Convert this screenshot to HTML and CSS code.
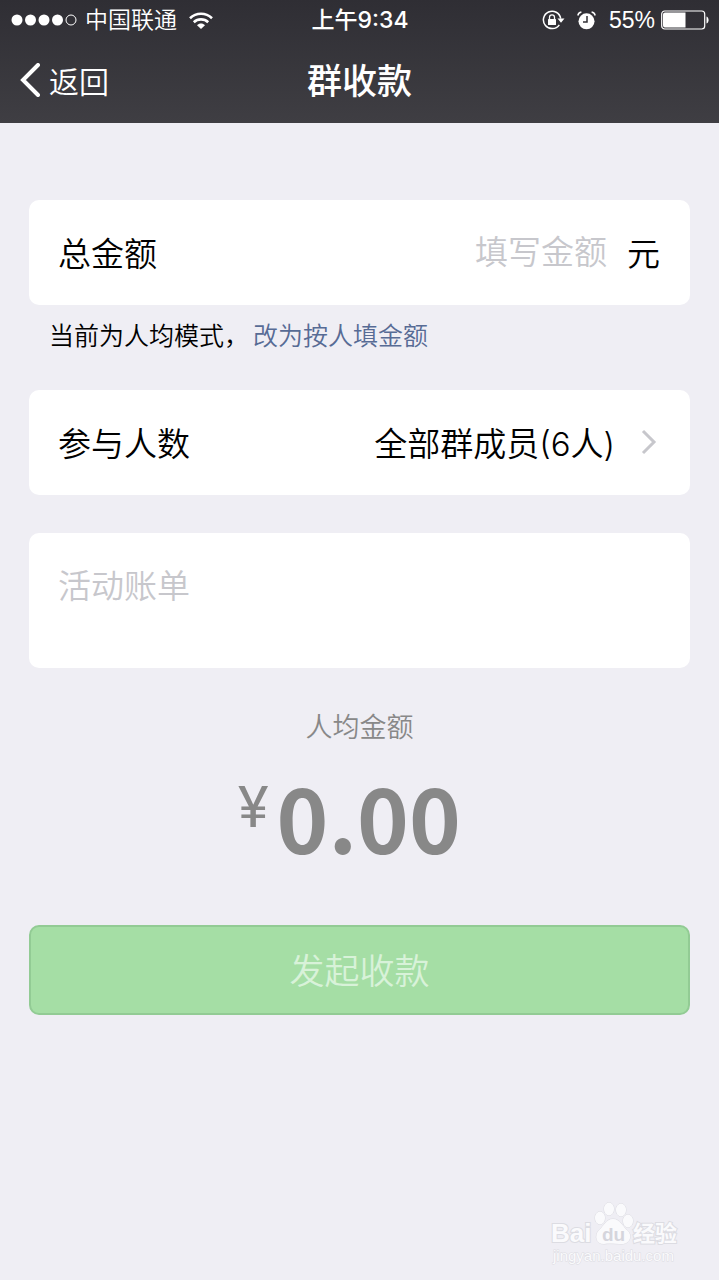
FILE: index.html
```html
<!DOCTYPE html>
<html lang="zh-CN">

<head>
    <title>群收款</title>
    <meta charset="utf-8" />
    <meta name="viewport" content="width=device-width, initial-scale=1.0" />
    <link rel="stylesheet" href="styles.css">
</head>

<body>
    <div class="page">
        <div class="header">
            <div class="status-bar">
                <div class="status-left">
                    <svg class="signal" width="66" height="12" viewBox="0 0 66 12">
                        <g fill="#fff">
                            <circle cx="6" cy="6" r="5.5" />
                            <circle cx="19.5" cy="6" r="5.5" />
                            <circle cx="33" cy="6" r="5.5" />
                            <circle cx="46.5" cy="6" r="5.5" />
                        </g>
                        <circle cx="60" cy="6" r="5" fill="none" stroke="#fff" />
                    </svg>
                    <span class="carrier">中国联通</span>
                    <svg class="wifi" width="24" height="17" viewBox="0 0 24 17">
                        <g fill="none" stroke="#fff" stroke-width="2.6">
                            <path d="M1 6.2C7.2.3 16.8.3 23 6.2" />
                            <path d="M4.8 10.2c4-3.8 10.4-3.8 14.4 0" />
                        </g>
                        <path d="M8 13.2c2.3-2.2 5.7-2.2 8 0L12 17z" fill="#fff" />
                    </svg>
                </div>
                <div class="time">上午9:34</div>
                <div class="status-right">
                    <svg class="lock" width="23" height="20" viewBox="0 0 23 20">
                        <path d="M17.3 14.8A8.7 8.7 0 1 1 18.7 8.6" fill="none" stroke="#fff" stroke-width="1.5" />
                        <path d="M15.5 8.5h7L19 12.8z" fill="#fff" />
                        <rect x="6" y="9" width="8" height="6" rx=".6" fill="#fff" />
                        <path d="M7.5 9.5V7.3a2.5 2.5 0 0 1 5 0v2.2" fill="none" stroke="#fff" stroke-width="1.3" />
                    </svg>
                    <svg class="alarm" width="19" height="19" viewBox="0 0 19 19">
                        <circle cx="9.5" cy="10.3" r="8" fill="#fff" />
                        <path d="M.8 4.5C1.2 2.6 2.5 1.4 4.4 1M18.2 4.5C17.8 2.6 16.5 1.4 14.6 1" fill="none" stroke="#fff" stroke-width="1.4" />
                        <path d="M10 5v6H6" fill="none" stroke="#333237" stroke-width="1.5" />
                    </svg>
                    <span class="percent">55%</span>
                    <svg class="battery" width="48" height="20" viewBox="0 0 48 20">
                        <rect x=".7" y="1" width="43" height="18" rx="3" fill="none" stroke="#fff" stroke-width="1.2" />
                        <path d="M4 2.5h20.5v15H4a2 2 0 0 1-2-2v-11a2 2 0 0 1 2-2z" fill="#fff" />
                        <path d="M45.5 6.5c2.8 1 2.8 6 0 7z" fill="#fff" />
                    </svg>
                </div>
            </div>
            <div class="nav-bar">
                <a class="back" href="#">
                    <svg width="20" height="34" viewBox="0 0 20 34">
                        <path d="M18 2L3 17l15 15" fill="none" stroke="#fff" stroke-width="4" stroke-linecap="round" />
                    </svg>
                    返回
                </a>
                <h1 class="title">群收款</h1>
            </div>
        </div>
        <form class="form-body">
            <div class="card row">
                <label for="total">总金额</label>
                <input class="input" id="total" type="text" inputmode="decimal" placeholder="填写金额">
                <span class="unit">元</span>
            </div>
            <div class="hint">当前为人均模式&#65292;<a class="mode-link" href="#">改为按人填金额</a></div>
            <div class="card row">
                <label for="member">参与人数</label>
                <button class="member-btn" id="member" type="button">
                    全部群成员(6人)
                    <svg width="16" height="26" viewBox="0 0 16 26">
                        <path d="M2 2l11 11L2 24" fill="none" stroke="#c7c7cc" stroke-width="3" />
                    </svg>
                </button>
            </div>
            <div class="card note">
                <textarea class="input" aria-label="活动账单" placeholder="活动账单"></textarea>
            </div>
            <div class="average">人均金额</div>
            <div class="amount"><span class="symbol">¥</span>0.00</div>
            <button class="sure-btn" type="button">发起收款</button>
        </form>
        <svg class="watermark" width="134" height="66" viewBox="0 0 134 66">
            <g fill="#fafafc" stroke="#dcdce2">
                <ellipse cx="52" cy="18" rx="5" ry="6.5" />
                <ellipse cx="61" cy="9" rx="5" ry="6.5" />
                <ellipse cx="73" cy="10" rx="5" ry="6.5" />
                <ellipse cx="80" cy="21" rx="5" ry="6.5" />
                <path d="M65 19c7 0 9 7 14 11 6 5 3 14-5 14-5 0-13-1-18 0-8 0-10-8-5-14 5-4 7-11 14-11z" />
            </g>
            <text class="mark-logo" x="3" y="42">Bai</text>
            <text class="mark-du" x="54" y="41">du</text>
            <text class="mark-name" x="85" y="41">经验</text>
            <text class="mark-url" x="5" y="61">jingyan.baidu.com</text>
        </svg>
    </div>
</body>

</html>
```
FILE: styles.css
```css
html,
body {
    width: 100%;
    height: 100%;
    margin: 0;
}

* {
    box-sizing: border-box;
}

body,
button,
input,
textarea {
    font-family: Inter, "Noto Sans CJK SC", sans-serif;
    font-weight: 350;
}

.page {
    position: relative;
    width: 100%;
    min-height: 100%;
    background-color: #efeef4;
    overflow: hidden;
}

.header {
    color: #fff;
    background: linear-gradient(to bottom, #2f2e34, #3f3e43);
}

.status-bar {
    display: grid;
    grid-template-columns: 1fr auto 1fr;
    align-items: center;
    height: 40px;
    padding: 0 10px 0 11px;
    font-size: 23px;
    line-height: 40px;
}

.status-left,
.status-right {
    display: flex;
    align-items: center;
}

.status-right {
    justify-content: flex-end;
}

.carrier {
    margin: 0 12px 0 8px;
}

.time {
    font-weight: 500;
}

.alarm {
    margin: 0 13px 0 12px;
}

.percent {
    margin-right: 6px;
    font-family: "Liberation Sans", sans-serif;
}

.nav-bar {
    display: grid;
    grid-template-columns: 1fr auto 1fr;
    align-items: center;
    height: 83px;
    padding: 0 20px 3px;
}

.back {
    display: flex;
    align-items: center;
    gap: 9px;
    color: #fff;
    font-size: 30px;
    text-decoration: none;
}

.title {
    margin: 0;
    padding-bottom: 4px;
    font-size: 35px;
    font-weight: 500;
}

.form-body {
    display: flex;
    flex-direction: column;
    padding: 77px 29px 40px;
}

.card {
    border-radius: 10px;
    background-color: #fff;
    font-size: 33px;
}

.row {
    display: flex;
    align-items: center;
    justify-content: space-between;
    height: 105px;
    padding: 0 30px 2px 29px;
}

.input {
    flex: 1;
    min-width: 0;
    padding: 0;
    border: none;
    outline: none;
    resize: none;
    color: #000;
    background: none;
    font-size: 33px;
    line-height: 48px;
}

.row .input {
    height: 48px;
    text-align: right;
}

.input::placeholder {
    color: #c7c7cc;
}

.unit {
    margin-left: 20px;
}

.hint {
    height: 85px;
    padding: 0 20px;
    font-size: 25px;
    line-height: 62px;
}

.mode-link {
    margin-left: 4px;
    color: #576b95;
    text-decoration: none;
}

.member-btn {
    display: flex;
    align-items: center;
    gap: 26px;
    padding: 0 3px 0 0;
    border: none;
    color: #000;
    background: none;
    font-size: 33px;
}

.note {
    display: flex;
    height: 135px;
    margin-top: 38px;
    padding: 29px;
}

.average {
    margin-top: 40px;
    color: #888;
    font-size: 27px;
    line-height: 40px;
    text-align: center;
}

.amount {
    display: flex;
    justify-content: center;
    padding-right: 20px;
    color: #888;
    font-family: "Noto Sans CJK SC", sans-serif;
    font-size: 88px;
    font-weight: 700;
    line-height: 136px;
}

.symbol {
    margin-right: 8px;
    font-family: Roboto, sans-serif;
    font-size: 58px;
    font-weight: 400;
    line-height: 118px;
}

.sure-btn {
    height: 90px;
    margin-top: 41px;
    padding: 0 0 4px;
    border: 2px solid #92cb94;
    border-radius: 10px;
    color: #d8f2d9;
    background-color: #a5dea5;
    font-size: 35px;
}

.watermark {
    position: absolute;
    right: 37px;
    bottom: 14px;
    fill: #fafafc;
    stroke: #dcdce2;
    font-family: "Liberation Sans", "Noto Sans CJK SC", sans-serif;
    font-weight: 700;
    paint-order: stroke;
}

.mark-logo {
    font-size: 26px;
    stroke-width: 2px;
}

.mark-name {
    font-size: 22px;
    stroke-width: 2px;
}

.mark-du {
    fill: #d5d5dc;
    stroke: none;
    font-size: 19px;
}

.mark-url {
    font-size: 15px;
    font-weight: 400;
    stroke-width: 1px;
}
```
